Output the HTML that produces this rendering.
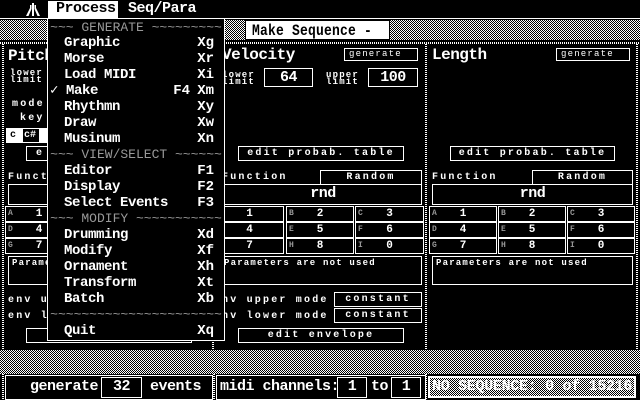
<!DOCTYPE html>
<html><head><meta charset="utf-8"><style>
*{margin:0;padding:0;box-sizing:border-box}
body{width:640px;height:400px;background:#000;position:relative;overflow:hidden;color:#fff;font-family:"Liberation Mono",monospace;font-weight:bold}
.a{position:absolute}
.g{background:repeating-conic-gradient(#fff 0 25%,#000 0 50%) 0 0/2px 2px}
.vl{position:absolute;width:2px;background:repeating-linear-gradient(#fff 0 1px,#000 1px 2px)}
.b{position:absolute;border:1px solid #fff}
.s{font-size:10px;letter-spacing:2.2px;white-space:nowrap;position:absolute;line-height:10px}
.xs{font-size:9px;letter-spacing:1.2px;white-space:nowrap;position:absolute;line-height:9px}
.big{font-size:15px;position:absolute;white-space:nowrap;letter-spacing:-0.5px;line-height:16px}
.c{text-align:center}
.m{position:absolute;left:64px;font-size:14px;letter-spacing:-0.4px;line-height:16px;white-space:nowrap}
.k{position:absolute;right:10px;font-size:14px;line-height:16px}
.h{position:absolute;left:0;width:176px;text-align:center;font-size:13px;line-height:16px;color:#999;font-weight:normal;white-space:nowrap;letter-spacing:0}
.cell{position:absolute;height:16px;border:1px solid #fff;font-size:11px;line-height:14px;text-align:center}
.cell i{position:absolute;left:2px;top:0;font-style:normal;font-size:8px;color:#999}
</style></head><body>
<!-- menu bar -->
<div class="a" style="left:0;top:18px;width:640px;height:1px;background:#fff"></div>
<svg class="a" style="left:26px;top:3px" width="14" height="13" viewBox="0 0 14 13"><path d="M6 0h2v13h-2zM4 2h1.5v4l-3 7h-2.5l4-8zM8.5 2h1.5v3l4 8h-2.5l-3-7z" fill="#fff"/></svg>
<div class="a" style="left:48px;top:1px;width:70px;height:17px;background:#fff"></div>
<div class="big" style="left:56px;top:1px;color:#000">Process</div>
<div class="big" style="left:128px;top:1px">Seq/Para</div>
<!-- title band -->
<div class="a g" style="left:0;top:20px;width:640px;height:20px"></div>
<div class="a" style="left:245px;top:20px;width:145px;height:20px;background:#fff;border:1px solid #000"></div>
<div class="big" style="left:252px;top:22px;color:#000;font-size:13px;letter-spacing:0.2px;transform:scaleY(1.2);transform-origin:0 0">Make Sequence -</div>
<div class="a" style="left:0;top:42px;width:640px;height:2px;background:repeating-linear-gradient(90deg,#fff 0 1px,#000 1px 2px)"></div>
<!-- panel dividers -->
<div class="vl" style="left:2px;top:44px;height:306px"></div>
<div class="vl" style="left:212px;top:44px;height:306px"></div>
<div class="vl" style="left:425px;top:44px;height:306px"></div>
<div class="vl" style="left:636px;top:44px;height:306px"></div>
<!-- bottom gray -->
<div class="a g" style="left:0;top:350px;width:640px;height:24px"></div>
<div class="vl" style="left:2px;top:374px;height:26px"></div>
<div class="vl" style="left:213px;top:374px;height:26px"></div>
<div class="vl" style="left:425px;top:374px;height:26px"></div>

<!-- PITCH -->
<div class="big" style="left:8px;top:48px;font-size:16px">Pitch</div>
<div class="xs" style="left:10px;top:70px;line-height:7px">lower<br>limit</div>
<div class="s" style="left:12px;top:100px">mode</div>
<div class="s" style="left:20px;top:114px">key</div>
<div class="a" style="left:6px;top:128px;width:50px;height:15px;background:#fff"></div>
<div class="s" style="left:10px;top:131px;color:#000">c</div>
<div class="a" style="left:23px;top:129px;width:16px;height:13px;background:#000"></div>
<div class="s" style="left:24px;top:131px;letter-spacing:0">c#</div>
<div class="b" style="left:26px;top:146px;width:166px;height:15px"></div>
<div class="s" style="left:36px;top:149px">e</div>
<div class="s" style="left:8px;top:173px">Funct</div>
<div class="b" style="left:8px;top:184px;width:200px;height:21px"></div>
<div class="cell" style="left:5px;top:206px;width:68px"><i>A</i>1</div>
<div class="cell" style="left:5px;top:222px;width:68px"><i>D</i>4</div>
<div class="cell" style="left:5px;top:238px;width:68px"><i>G</i>7</div>
<div class="b" style="left:8px;top:256px;width:200px;height:29px"></div>
<div class="xs" style="left:12px;top:259px">Parame</div>
<div class="s" style="left:8px;top:296px">env u</div>
<div class="s" style="left:8px;top:312px">env l</div>
<div class="b" style="left:26px;top:328px;width:166px;height:15px"></div>

<!-- VELOCITY -->
<div class="big" style="left:222px;top:47px;font-size:16px">Velocity</div>
<div class="b" style="left:344px;top:48px;width:74px;height:13px"></div>
<div class="xs" style="left:349px;top:50px;font-weight:normal">generate</div>
<div class="xs" style="left:222px;top:72px;line-height:7px">lower<br>limit</div>
<div class="b" style="left:264px;top:68px;width:49px;height:19px"></div>
<div class="big c" style="left:264px;top:70px;width:49px">64</div>
<div class="xs" style="left:326px;top:72px;line-height:7px">upper<br>limit</div>
<div class="b" style="left:368px;top:68px;width:50px;height:19px"></div>
<div class="big c" style="left:368px;top:70px;width:50px">100</div>
<div class="b" style="left:238px;top:146px;width:166px;height:15px"></div>
<div class="s c" style="left:238px;top:149px;width:166px">edit probab. table</div>
<div class="s" style="left:222px;top:173px">Function</div>
<div class="b" style="left:320px;top:170px;width:102px;height:15px"></div>
<div class="s c" style="left:320px;top:173px;width:102px">Random</div>
<div class="b" style="left:224px;top:184px;width:198px;height:21px"></div>
<div class="big c" style="left:224px;top:186px;width:198px">rnd</div>
<div class="cell" style="left:215px;top:206px;width:69px">1</div>
<div class="cell" style="left:286px;top:206px;width:68px"><i>B</i>2</div>
<div class="cell" style="left:355px;top:206px;width:69px"><i>C</i>3</div>
<div class="cell" style="left:215px;top:222px;width:69px">4</div>
<div class="cell" style="left:286px;top:222px;width:68px"><i>E</i>5</div>
<div class="cell" style="left:355px;top:222px;width:69px"><i>F</i>6</div>
<div class="cell" style="left:215px;top:238px;width:69px">7</div>
<div class="cell" style="left:286px;top:238px;width:68px"><i>H</i>8</div>
<div class="cell" style="left:355px;top:238px;width:69px"><i>I</i>0</div>
<div class="b" style="left:220px;top:256px;width:202px;height:29px"></div>
<div class="xs" style="left:224px;top:259px">Parameters are not used</div>
<div class="s" style="left:222px;top:296px">nv upper mode</div>
<div class="b" style="left:334px;top:292px;width:88px;height:15px"></div>
<div class="s c" style="left:334px;top:295px;width:88px">constant</div>
<div class="s" style="left:222px;top:312px">nv lower mode</div>
<div class="b" style="left:334px;top:308px;width:88px;height:15px"></div>
<div class="s c" style="left:334px;top:311px;width:88px">constant</div>
<div class="b" style="left:238px;top:328px;width:166px;height:15px"></div>
<div class="s c" style="left:238px;top:331px;width:166px">edit envelope</div>

<!-- LENGTH -->
<div class="big" style="left:432px;top:47px;font-size:16px">Length</div>
<div class="b" style="left:556px;top:48px;width:74px;height:13px"></div>
<div class="xs" style="left:561px;top:50px;font-weight:normal">generate</div>
<div class="b" style="left:450px;top:146px;width:165px;height:15px"></div>
<div class="s c" style="left:450px;top:149px;width:165px">edit probab. table</div>
<div class="s" style="left:432px;top:173px">Function</div>
<div class="b" style="left:532px;top:170px;width:101px;height:15px"></div>
<div class="s c" style="left:532px;top:173px;width:101px">Random</div>
<div class="b" style="left:432px;top:184px;width:201px;height:21px"></div>
<div class="big c" style="left:432px;top:186px;width:201px">rnd</div>
<div class="cell" style="left:429px;top:206px;width:68px"><i>A</i>1</div>
<div class="cell" style="left:498px;top:206px;width:68px"><i>B</i>2</div>
<div class="cell" style="left:567px;top:206px;width:68px"><i>C</i>3</div>
<div class="cell" style="left:429px;top:222px;width:68px"><i>D</i>4</div>
<div class="cell" style="left:498px;top:222px;width:68px"><i>E</i>5</div>
<div class="cell" style="left:567px;top:222px;width:68px"><i>F</i>6</div>
<div class="cell" style="left:429px;top:238px;width:68px"><i>G</i>7</div>
<div class="cell" style="left:498px;top:238px;width:68px"><i>H</i>8</div>
<div class="cell" style="left:567px;top:238px;width:68px"><i>I</i>0</div>
<div class="b" style="left:432px;top:256px;width:201px;height:29px"></div>
<div class="xs" style="left:436px;top:259px">Parameters are not used</div>

<!-- STATUS -->
<div class="b" style="left:5px;top:375px;width:208px;height:25px"></div>
<div class="big" style="left:30px;top:379px">generate</div>
<div class="b" style="left:101px;top:377px;width:41px;height:21px"></div>
<div class="big c" style="left:101px;top:379px;width:41px">32</div>
<div class="big" style="left:150px;top:379px">events</div>
<div class="b" style="left:216px;top:375px;width:210px;height:25px"></div>
<div class="big" style="left:220px;top:379px">midi channels:</div>
<div class="b" style="left:337px;top:377px;width:30px;height:21px"></div>
<div class="big c" style="left:337px;top:379px;width:30px">1</div>
<div class="big" style="left:371px;top:379px">to</div>
<div class="b" style="left:391px;top:377px;width:30px;height:21px"></div>
<div class="big c" style="left:391px;top:379px;width:30px">1</div>
<div class="a" style="left:428px;top:376px;width:208px;height:22px;background:#fff"></div>
<div class="a g" style="left:430px;top:378px;width:204px;height:18px"></div>
<div class="big" style="left:432px;top:379px;letter-spacing:-0.3px">NO SEQUENCE: 0 of 15216</div>

<!-- DROPDOWN MENU -->
<div class="a" style="left:47px;top:18px;width:178px;height:323px;background:#000;border:1px solid #fff">
 <div class="h" style="top:1px">~~~ GENERATE ~~~~~~~~~</div>
 <div class="m" style="top:16px;left:16px">Graphic</div><div class="k" style="top:16px">Xg</div>
 <div class="m" style="top:32px;left:16px">Morse</div><div class="k" style="top:32px">Xr</div>
 <div class="m" style="top:48px;left:16px">Load MIDI</div><div class="k" style="top:48px">Xi</div>
 <div class="m" style="top:64px;left:2px">✓ Make</div><div class="k" style="top:64px;right:34px">F4</div><div class="k" style="top:64px">Xm</div>
 <div class="m" style="top:80px;left:16px">Rhythmn</div><div class="k" style="top:80px">Xy</div>
 <div class="m" style="top:96px;left:16px">Draw</div><div class="k" style="top:96px">Xw</div>
 <div class="m" style="top:112px;left:16px">Musinum</div><div class="k" style="top:112px">Xn</div>
 <div class="h" style="top:128px">~~~ VIEW/SELECT ~~~~~~</div>
 <div class="m" style="top:144px;left:16px">Editor</div><div class="k" style="top:144px">F1</div>
 <div class="m" style="top:160px;left:16px">Display</div><div class="k" style="top:160px">F2</div>
 <div class="m" style="top:176px;left:16px">Select Events</div><div class="k" style="top:176px">F3</div>
 <div class="h" style="top:192px">~~~ MODIFY ~~~~~~~~~~~</div>
 <div class="m" style="top:208px;left:16px">Drumming</div><div class="k" style="top:208px">Xd</div>
 <div class="m" style="top:224px;left:16px">Modify</div><div class="k" style="top:224px">Xf</div>
 <div class="m" style="top:240px;left:16px">Ornament</div><div class="k" style="top:240px">Xh</div>
 <div class="m" style="top:256px;left:16px">Transform</div><div class="k" style="top:256px">Xt</div>
 <div class="m" style="top:272px;left:16px">Batch</div><div class="k" style="top:272px">Xb</div>
 <div class="h" style="top:288px">~~~~~~~~~~~~~~~~~~~~~~</div>
 <div class="m" style="top:304px;left:16px">Quit</div><div class="k" style="top:304px">Xq</div>
</div>
</body></html>
